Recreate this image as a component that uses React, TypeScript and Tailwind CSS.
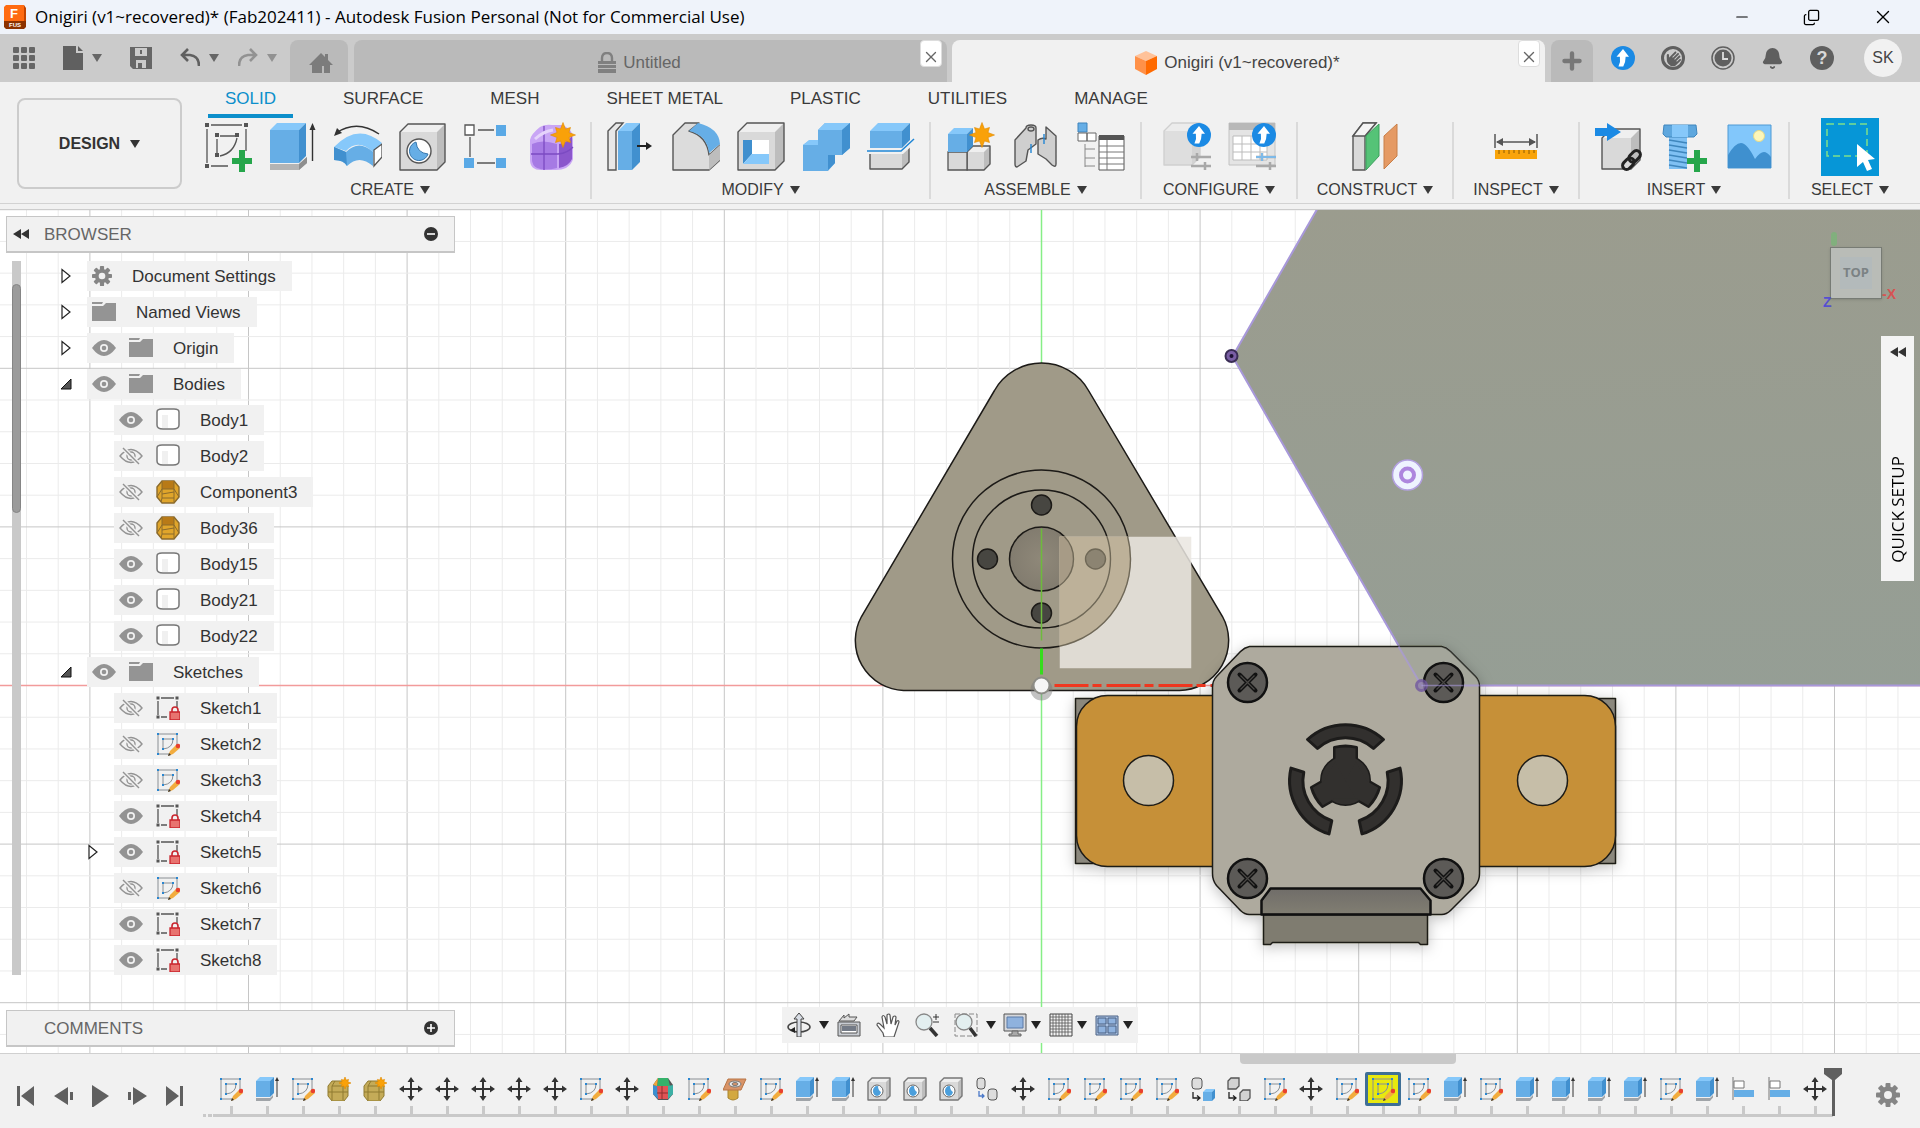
import type { ReactNode } from "react";
import clsx from "clsx";
import { Bell, Copy, Minus, Plus, X } from "lucide-react";
import { FaHand } from "react-icons/fa6";

type IconProps = { className?: string };

const BLUE = { front: "#66aee6", top: "#86c8fa", side: "#4190cf" };
const GRAY = { front: "#d9d9d9", top: "#efefef", side: "#bdbdbd" };

/* ---------- shared drawing helpers ---------- */

const Box = ({
  x, y, w, h, d, c, stroke = "none",
}: { x: number; y: number; w: number; h: number; d: number; c: typeof BLUE; stroke?: string }) => (
  <g stroke={stroke} strokeWidth={1.4} strokeLinejoin="round">
    <path d={`M${x} ${y + d}h${w}v${h}h${-w}z`} fill={c.front} stroke="none" />
    <path d={`M${x} ${y + d}l${d} ${-d}h${w}l${-d} ${d}z`} fill={c.top} stroke="none" />
    <path d={`M${x + w} ${y + d}l${d} ${-d}v${h}l${-d} ${d}z`} fill={c.side} stroke="none" />
    <path d={`M${x} ${y + d}l${d} ${-d}h${w}v${h}l${-d} ${d}h${-w}z`} fill="none" />
  </g>
);

const Star = ({ cx, cy, r }: { cx: number; cy: number; r: number }) => {
  const pts = Array.from({ length: 16 }, (_, i) => {
    const a = (i * Math.PI) / 8 - Math.PI / 2;
    const rr = i % 2 ? r * 0.52 : i % 4 ? r * 0.85 : r;
    return `${(cx + rr * Math.cos(a)).toFixed(2)},${(cy + rr * Math.sin(a)).toFixed(2)}`;
  }).join(" ");
  return <polygon points={pts} fill="#f9a109" stroke="#e08a00" strokeWidth={0.6} />;
};

const UpBadge = ({ cx, cy, r }: { cx: number; cy: number; r: number }) => (
  <g>
    <circle cx={cx} cy={cy} r={r} fill="#1b8ae4" />
    <path
      d={`M${cx} ${cy - r * 0.75}l${r * 0.5} ${r * 0.65}h${-r * 0.28}q0 ${r * 0.5} ${-r * 0.2} ${r * 0.8}h${-r * 0.4}q${r * 0.2} ${-r * 0.4} ${r * 0.12} ${-r * 0.8}h${-r * 0.28}z`}
      fill="#fff"
    />
  </g>
);

const Caret = ({ className }: IconProps) => (
  <svg className={clsx("h-2 w-2.5 shrink-0", className)} viewBox="0 0 10 8">
    <path d="M0 0h10L5 8z" fill="currentColor" />
  </svg>
);

const Rewind = () => (
  <svg className="h-3 w-4" viewBox="0 0 16 12">
    <path d="M8 1v10L0 6zM16 1v10L8 6z" fill="#333" />
  </svg>
);

/* ---------- ribbon icons ---------- */

const Tool = ({ children }: { children: ReactNode }) => (
  <svg className="h-[50px] w-12" viewBox="0 0 48 50">{children}</svg>
);

const CreateSketch = () => (
  <Tool>
    <path d="M7 3h31M3 7v34M7 44h17M42 7v22" stroke="#555" strokeWidth={1.3} fill="none" />
    <path d="M16 14h15M13 17v14M33 16q-3 15-17 18" stroke="#555" strokeWidth={1.3} fill="none" />
    <path d="M1 1h4v4H1zM40 1h4v4h-4zM1 42h4v4H1zM11 11h4v4h-4zM31 11h4v4h-4zM11 31h4v4h-4z" fill="#555" />
    <path d="M35 28h6v8h7v6h-7v8h-6v-8h-7v-6h7z" fill="#26a64b" />
  </Tool>
);
const Extrude = () => (
  <Tool>
    <path d="M1 42h29l8-7v6l-8 7H1z" fill="#b4b4b4" />
    <path d="M30 48l8-7v-6l-8 7z" fill="#8e8e8e" />
    <Box x={1} y={1} w={29} h={33} d={7} c={BLUE} />
    <path d="M43.500 39V6" stroke="#333" strokeWidth={1.4} />
    <path d="M43.500 1l3 7h-6z" fill="#333" />
  </Tool>
);
const Revolve = () => (
  <Tool>
    <path d="M2 11Q23-3 45 12" stroke="#333" strokeWidth={1.5} fill="none" />
    <path d="M0 14l3-8 5 5z" fill="#333" />
    <path d="M0 25Q24 0 48 21L39 30Q24 16 12 29z" fill="#86c8fa" />
    <path d="M0 25l12 5Q25 17 39 30v14Q25 32 13 44Q10 38 0 38z" fill="#66aee6" />
    <path d="M0 25l12 5 1 14Q10 38 0 38z" fill="#4190cf" />
    <path d="M40 28l8-6v13l-8 9z" fill="#fff" stroke="#555" strokeWidth={1.3} />
  </Tool>
);
const Hole = () => (
  <Tool>
    <Box x={1} y={2} w={37} h={38} d={8} c={GRAY} stroke="#555" />
    <ellipse cx={20} cy={29} rx={12} ry={12} fill="#fff" stroke="#555" strokeWidth={1.4} />
    <path d="M17 20a9.500 9.500 0 1 0 12 12q-11-1-12-12z" fill="#66aee6" stroke="#3878ad" />
  </Tool>
);
const Pattern = () => (
  <Tool>
    <path d="M14 8h16M6 15v20M13 41h18" stroke="#555" strokeWidth={1.3} />
    <path d="M1 3h9v10H1z" fill="#fff" stroke="#555" strokeWidth={1.3} />
    <path d="M32 3h10v11H32zM0 36h10v10H0zM32 36h10v10H32z" fill="#5aa9e6" />
  </Tool>
);
const Form = () => (
  <Tool>
    <path d="M1 18Q2 12 11 5q5-3 12-2h10q11 4 11 14v20q-1 5-7 9-4 2-10 2H12Q1 48 1 38z" fill="#c9a6f5" />
    <path d="M3 22q10-5 25 0v24q-12 3-20 0-5-3-5-8z" fill="#a67ae4" />
    <path d="M30 22q8-1 13-8v23q-3 7-13 9z" fill="#8b57cc" />
    <path d="M2 32h27q10-1 15-7M15 4v44" stroke="#7c4bc2" strokeWidth={1.3} fill="none" />
    <path d="M6 17q9-8 18-9" stroke="#e5d3fb" strokeWidth={3} fill="none" />
    <Star cx={34} cy={13} r={12.5} />
  </Tool>
);
const PressPull = () => (
  <Tool>
    <path d="M1 9l8-8h7L9 9v39H1z" fill="#e8e8e8" stroke="#555" strokeWidth={1.4} />
    <Box x={11} y={1} w={14} h={39} d={8} c={BLUE} />
    <path d="M30 24h12" stroke="#222" strokeWidth={2} />
    <path d="M39 20l6 4-6 4z" fill="#222" />
  </Tool>
);
const Fillet = () => (
  <Tool>
    <path d="M1 48V13L13 1h14L17 9q18 5 20 24l11-10v15L37 48z" fill="#dcdcdc" stroke="#555" strokeWidth={1.4} strokeLinejoin="round" />
    <path d="M17 9L26 1q21 5 22 21L37 31Q35 13 17 9z" fill="#66aee6" />
    <path d="M37 33l11-10v15L37 48z" fill="#bdbdbd" />
  </Tool>
);
const Shell = () => (
  <Tool>
    <Box x={1} y={1} w={37} h={38} d={9} c={GRAY} stroke="#555" />
    <path d="M6 18h26v24H6z" fill="#fff" />
    <path d="M6 18h9v14l-9 10z" fill="#3f8fce" />
    <path d="M6 42l9-10h17v10z" fill="#86c8fa" />
  </Tool>
);
const Combine = () => (
  <Tool>
    <path d="M1 23l7-5h8V8l7-7h25v25l-8 7h-7v8l-7 8H1z" fill="#66aee6" />
    <path d="M16 8l7-7h25l-8 7zM1 23l6-5h9v5z" fill="#86c8fa" />
    <path d="M40 8l8-7v25l-8 7zM26 33h7v8l-7 7z" fill="#4190cf" />
  </Tool>
);
const Split = () => (
  <Tool>
    <Box x={3} y={24} w={32} h={16} d={7} c={GRAY} stroke="#555" />
    <path d="M0 24v8h36l12-11v-8z" fill="#f1f1f1" />
    <path d="M0 29h34L47 17" stroke="#1f86d6" strokeWidth={1.5} fill="none" />
    <Box x={3} y={1} w={32} h={17} d={8} c={BLUE} />
  </Tool>
);
const NewComponent = () => (
  <Tool>
    <Box x={20} y={24} w={17} h={18} d={6} c={GRAY} stroke="#555" />
    <path d="M1 30h19v18H1z" fill="#d9d9d9" stroke="#555" strokeWidth={1.3} />
    <Box x={1} y={6} w={19} h={18} d={6} c={BLUE} />
    <Star cx={35} cy={13} r={12.5} />
  </Tool>
);
const Joint = () => (
  <Tool>
    <g fill="#cfcfcf" stroke="#555" strokeWidth={1.4} strokeLinejoin="round">
      <path d="M3 18L14 6q0-3 5-3t5 3v16l-8 6-2 11-9 6q-2 0-2-3z" />
      <path d="M34 5l10 9v28q0 4-4 1l-6-6-8-5V18q4-3 8-1z" />
      <ellipse cx={19} cy={7} rx={3} ry={2} />
    </g>
    <path d="M19 22v9M32 12v10" stroke="#2286d4" strokeWidth={1.4} />
  </Tool>
);
const Bom = () => (
  <Tool>
    <path d="M1 1h9v9H1z" fill="#66aee6" stroke="#3f83bb" />
    <path d="M1 11h9v8H1zM10 11h9v8h-9z" fill="#fff" stroke="#666" />
    <path d="M8 22v23M8 27h10M8 36h10M8 44h10" stroke="#888" fill="none" />
    <path d="M22 14h25v34H22z" fill="#fff" stroke="#555" />
    <path d="M22 13h25v5H22z" fill="#555" />
    <path d="M22 24h25M22 30h25M22 36h25M22 42h25M30 18v30" stroke="#777" />
  </Tool>
);
const Sliders = () => (
  <path d="M28 35h20M28 44h20M34 31v8M42 40v8" stroke="#a9a9a9" strokeWidth={2.5} />
);
const Configure = () => (
  <Tool>
    <Box x={1} y={1} w={28} h={34} d={8} c={{ front: "#dedede", top: "#ececec", side: "#d3d3d3" }} stroke="#d0d0d0" />
    <Sliders />
    <UpBadge cx={36} cy={13} r={12} />
  </Tool>
);
const ConfigTable = () => (
  <Tool>
    <path d="M1 1h46v42H1z" fill="#e4e4e4" stroke="#c2c2c2" />
    <path d="M1 1h46v7H1z" fill="#b8b8b8" />
    <path d="M5 14h34v24H5z" fill="#fff" stroke="#bbb" />
    <path d="M5 22h34M5 30h34M14 14v24M23 14v24M32 14v24" stroke="#bbb" />
    <Sliders />
    <path d="M28 35h20M34 31v8" stroke="#7db9e8" strokeWidth={2} />
    <UpBadge cx={36} cy={13} r={12} />
  </Tool>
);
const Construct = () => (
  <Tool>
    <path d="M2 14L12 1h13L14 14v34H2z" fill="#d9d9d9" stroke="#555" strokeWidth={1.4} />
    <path d="M2 14L12 1h13L14 14z" fill="#f4f4f4" stroke="#555" strokeWidth={1.4} />
    <path d="M15 14L28 2v32L15 48z" fill="#55c377" stroke="#3ba05c" />
    <path d="M33 14L46 2v32L33 47z" fill="#e59a64" stroke="#c87f49" />
  </Tool>
);
const Measure = () => (
  <Tool>
    <path d="M3 12v14M45 12v14M5 20h38" stroke="#555" strokeWidth={1.5} />
    <path d="M4 20l7-4v8zM44 20l-7-4v8z" fill="#555" />
    <path d="M3 28h42v9H3z" fill="#f9a40a" />
    <path d="M7 28v4M12 28v3M17 28v4M22 28v3M27 28v4M32 28v3M37 28v4M42 28v3" stroke="#8a5a00" />
  </Tool>
);
const InsertDerive = () => (
  <Tool>
    <Box x={7} y={7} w={29} h={31} d={9} c={GRAY} stroke="#555" />
    <path d="M0 6h12V1l14 9-14 9v-5H0z" fill="#1b8ae4" />
    <g fill="none" stroke="#222" strokeWidth={3}>
      <rect x={36} y={28} width={8} height={13} rx={4} transform="rotate(45 40 34)" />
      <rect x={29} y={35} width={8} height={13} rx={4} transform="rotate(45 33 42)" />
    </g>
  </Tool>
);
const Bolt = () => (
  <Tool>
    <path d="M9 13h18v34H9z" fill="#7fc0f3" />
    <path d="M9 18l18 3M9 23l18 3M9 28l18 3M9 33l18 3M9 38l18 3M9 43l18 3" stroke="#3f86bd" strokeWidth={1.3} />
    <path d="M4 3h32l1 9-3 3H6l-3-3z" fill="#5ea7de" stroke="#3f86bd" />
    <path d="M12 3h16v12H12z" fill="#86c8fa" />
    <path d="M34 28h6v8h7v6h-7v8h-6v-8h-7v-6h7z" fill="#26a64b" />
  </Tool>
);
const Canvas = () => (
  <Tool>
    <path d="M3 3h43v43H3z" fill="#82c7fb" stroke="#4f9ad4" />
    <circle cx={34} cy={14} r={5.5} fill="#fdf6b8" stroke="#e4d98a" />
    <path d="M3 33q7-12 13-12t14 16q5-7 9-7 3 0 7 5v11H3z" fill="#3f90cf" />
  </Tool>
);
const SelectTool = () => (
  <svg className="h-[58px] w-[58px] bg-[#0696d7]" viewBox="0 0 58 58">
    <path d="M6 6h40v32H6z" fill="none" stroke="#7fe08b" strokeWidth={1.5} strokeDasharray="7 4" />
    <path d="M36 26v23l6-5 4 9 5-2-4-9 7-1z" fill="#fff" />
  </svg>
);

/* ---------- small icons: browser tree and timeline ---------- */

const Sm = ({ children, className = "h-6 w-6" }: { children: ReactNode; className?: string }) => (
  <svg className={clsx("shrink-0", className)} viewBox="0 0 24 24">{children}</svg>
);

const SketchIcon = () => (
  <Sm>
    <path d="M2 2h19v14M2 2v20h12" fill="none" stroke="#8a8f94" />
    <path d="M7 7h10q0 9-10 10z" fill="none" stroke="#8a8f94" />
    <path d="M1 1h2v2H1zM20 1h2v2h-2zM1 21h2v2H1zM6 6h2v2H6zM16 6h2v2h-2zM6 16h2v2H6z" fill="#2b86cf" />
    <path d="M12 24l2-5 6-6 4 3-7 6z" fill="#f2ac3e" />
    <path d="M12 24l1-3 2 2z" fill="#333" />
    <circle cx={22} cy={14} r={2.3} fill="#e8402f" />
  </Sm>
);
const LockedSketch = () => (
  <Sm>
    <path d="M5 2h13M2 5v14M5 21h6M21 5v6" stroke="#555" strokeWidth={1.3} />
    <path d="M.5.5h3v3h-3zM19.500.5h3v3h-3zM.5 19.500h3v3h-3z" fill="#555" />
    <path d="M16 17v-3q0-3 3-3t3 3v3" fill="none" stroke="#c9252d" strokeWidth={1.6} />
    <path d="M14 16h10v8H14z" fill="#e8736f" stroke="#c9252d" strokeWidth={1.3} />
  </Sm>
);
const ExtrudeSm = () => (
  <Sm>
    <path d="M1 21h14l3-3v2.500L15 24H1z" fill="#a0a4a8" />
    <Box x={1} y={0} w={14} h={16} d={4} c={BLUE} />
    <path d="M22 20V3" stroke="#333" />
    <path d="M22 0l2 4h-4z" fill="#333" />
  </Sm>
);
const FormSm = () => (
  <Sm>
    <path d="M1 9l4-5h12l4 5v10l-4 5H5l-4-5z" fill="#c4ab58" stroke="#8f7a31" />
    <path d="M5 9h11v14M5 9v14M1 15h20M5 9L8 4M16 9l4-2" stroke="#8f7a31" fill="none" />
    <Star cx={18} cy={6} r={6} />
  </Sm>
);
const MoveSm = () => (
  <Sm>
    <path d="M12 3v18M3 12h18" stroke="#333" strokeWidth={2} />
    <path d="M12 0l3.500 5h-7zM12 24l3.500-5h-7zM0 12l5-3.500v7zM24 12l-5-3.500v7z" fill="#333" />
  </Sm>
);
const MeshSm = () => (
  <Sm>
    <path d="M2 8l5-7h10l5 7v9l-5 6H7l-5-6z" fill="#555" />
    <path d="M7 1h10l2 8H6z" fill="#35b26a" />
    <path d="M2 8l5 1v13l-5-5z" fill="#3b8fd0" />
    <path d="M6 9h11v13H7z" fill="#e25454" />
    <path d="M17 9l5-1v9l-5 5z" fill="#3cb0a5" />
    <path d="M2 8l5-7-1 8z" fill="#f2a63c" />
    <path d="M6 16h11M11 9v13" stroke="#8d2e2e" fill="none" />
  </Sm>
);
const FunnelSm = () => (
  <Sm>
    <path d="M5 12h10v9q-5 4-10 0z" fill="#d3a83f" stroke="#a88430" />
    <path d="M5 2h18l-5 11H0z" fill="#d99468" stroke="#b87545" />
    <ellipse cx={12} cy={7} rx={6} ry={3} fill="#eee" stroke="#777" />
    <ellipse cx={12} cy={7} rx={3} ry={1.5} fill="#d99468" stroke="#777" />
  </Sm>
);
const HoleSm = () => (
  <Sm>
    <Box x={1} y={1} w={18} h={18} d={4} c={GRAY} stroke="#777" />
    <circle cx={10} cy={14} r={6} fill="#fff" stroke="#666" />
    <ellipse cx={10} cy={14} rx={4} ry={5} fill="#4b9fdc" />
    <path d="M11 9a4 5 0 0 1 3 6q-3-2-3-6z" fill="#fff" />
  </Sm>
);
const PasteBodies = () => (
  <Sm>
    <rect x={2} y={1} width={8} height={11} rx={3} fill="#ddd" stroke="#555" />
    <rect x={13} y={12} width={9} height={11} rx={3} fill="#ddd" stroke="#555" />
    <path d="M4 14v5h5M7 17l2 2-2 2" fill="none" stroke="#4b79c9" strokeWidth={1.3} />
  </Sm>
);
const CopyBlue = () => (
  <Sm>
    <rect x={1} y={1} width={10} height={11} rx={3} fill="#ddd" stroke="#555" />
    <Box x={12} y={12} w={9} h={9} d={3} c={BLUE} />
    <path d="M2 15v6h6M6 18.500l3 2.500-3 2.500" fill="none" stroke="#222" strokeWidth={1.3} />
  </Sm>
);
const CopyGray = () => (
  <Sm>
    <path d="M1 4l3-3h8v8l-3 3H1zM13 16l3-3h7v8l-3 3h-7z" fill="#d2d2d2" stroke="#555" strokeWidth={1.3} />
    <path d="M2 15v6h6M6 18.500l3 2.500-3 2.500" fill="none" stroke="#222" strokeWidth={1.3} />
  </Sm>
);
const AlignSm = () => (
  <Sm>
    <path d="M2 0v23" stroke="#777" />
    <path d="M3 4h10v7H3z" fill="#fff" stroke="#777" />
    <path d="M3 13h20v7H3z" fill="#66aee6" />
  </Sm>
);

const Eye = () => (
  <Sm>
    <path d="M0 12q12-16 24 0q-12 16-24 0z" fill="#939393" />
    <circle cx={12} cy={12} r={4} fill="#f1f1f1" />
    <circle cx={12} cy={12} r={2.3} fill="#939393" />
  </Sm>
);
const EyeOff = () => (
  <Sm>
    <g fill="none" stroke="#939393" strokeWidth={1.4}>
      <path d="M1 12q11-13 22 0q-11 13-22 0z" />
      <circle cx={12} cy={12} r={4} />
      <path d="M5 5l15 15" stroke="#f1f1f1" strokeWidth={4} />
      <path d="M4 4l16 16" />
    </g>
  </Sm>
);
const Folder = () => (
  <Sm>
    <path d="M0 2h11l-1 2H0zM0 6h11l3-3h10v18H0z" fill="#949494" />
  </Sm>
);
const Gear = ({ className }: IconProps) => (
  <Sm className={className}>
    <g fill="#858585">
      {[0, 45, 90, 135].map((a) => (
        <rect key={a} x={9.5} y={0} width={5} height={24} rx={1} transform={`rotate(${a} 12 12)`} />
      ))}
      <circle cx={12} cy={12} r={8.5} />
    </g>
    <circle cx={12} cy={12} r={4} fill="#f1f1f1" />
  </Sm>
);
const Body = () => (
  <Sm>
    <path d="M1 4q0-3 5-3h12q5 0 5 3v13q0 4-6 4H7q-6 0-6-4z" fill="#fff" stroke="#777" strokeWidth={1.5} />
    <path d="M6 7h6v13H6z" fill="#f0f0f0" />
  </Sm>
);
const MeshBody = () => (
  <Sm>
    <path d="M1 7l5-6h12l5 6v10l-5 6H6l-5-6z" fill="#e0a52b" stroke="#8a6a2c" strokeWidth={1.4} />
    <path d="M6 1v8h12V1z" fill="#b87a17" />
    <path d="M6 9h12v9H6zM6 1v8L1 17M18 1v8l5 8M6 18l-1 4M18 18v4M6 14l12-2" fill="none" stroke="#8a6a2c" />
  </Sm>
);

const Expand = () => (
  <svg className="h-4 w-3" viewBox="0 0 12 16"><path d="M2 1.500v13l8-6.500z" fill="#fff" stroke="#222" strokeWidth={1.2} /></svg>
);
const Collapse = () => (
  <svg className="h-4 w-3" viewBox="0 0 12 16"><path d="M11 3v10H1z" fill="#555" stroke="#111" /></svg>
);

/* ---------- data ---------- */

const ribbonTabs = ["SOLID", "SURFACE", "MESH", "SHEET METAL", "PLASTIC", "UTILITIES", "MANAGE"];

const ribbonGroups = [
  { label: "CREATE", width: "w-[394px] pr-2", tools: [CreateSketch, Extrude, Revolve, Hole, Pattern, Form] },
  { label: "MODIFY", width: "w-[339px]", tools: [PressPull, Fillet, Shell, Combine, Split] },
  { label: "ASSEMBLE", width: "w-[211px]", tools: [NewComponent, Joint, Bom] },
  { label: "CONFIGURE", width: "w-[156px]", tools: [Configure, ConfigTable] },
  { label: "CONSTRUCT", width: "w-[156px]", tools: [Construct] },
  { label: "INSPECT", width: "w-[126px]", tools: [Measure] },
  { label: "INSERT", width: "w-[210px]", tools: [InsertDerive, Bolt, Canvas] },
  { label: "SELECT", width: "w-[120px]", tools: [SelectTool] },
];

type Row = { name: string; level: 1 | 2; caret?: "open" | "closed"; eye?: "on" | "off"; icon: () => ReactNode };

const rows: Row[] = [
  { name: "Document Settings", level: 1, caret: "closed", icon: () => <Gear className="h-5 w-5" /> },
  { name: "Named Views", level: 1, caret: "closed", icon: Folder },
  { name: "Origin", level: 1, caret: "closed", eye: "on", icon: Folder },
  { name: "Bodies", level: 1, caret: "open", eye: "on", icon: Folder },
  { name: "Body1", level: 2, eye: "on", icon: Body },
  { name: "Body2", level: 2, eye: "off", icon: Body },
  { name: "Component3", level: 2, eye: "off", icon: MeshBody },
  { name: "Body36", level: 2, eye: "off", icon: MeshBody },
  { name: "Body15", level: 2, eye: "on", icon: Body },
  { name: "Body21", level: 2, eye: "on", icon: Body },
  { name: "Body22", level: 2, eye: "on", icon: Body },
  { name: "Sketches", level: 1, caret: "open", eye: "on", icon: Folder },
  { name: "Sketch1", level: 2, eye: "off", icon: LockedSketch },
  { name: "Sketch2", level: 2, eye: "off", icon: SketchIcon },
  { name: "Sketch3", level: 2, eye: "off", icon: SketchIcon },
  { name: "Sketch4", level: 2, eye: "on", icon: LockedSketch },
  { name: "Sketch5", level: 2, caret: "closed", eye: "on", icon: LockedSketch },
  { name: "Sketch6", level: 2, eye: "off", icon: SketchIcon },
  { name: "Sketch7", level: 2, eye: "on", icon: LockedSketch },
  { name: "Sketch8", level: 2, eye: "on", icon: LockedSketch },
];

const timelineIcons: Record<string, () => ReactNode> = {
  s: SketchIcon, e: ExtrudeSm, f: FormSm, m: MoveSm, x: MeshSm, u: FunnelSm,
  h: HoleSm, p: PasteBodies, b: CopyBlue, g: CopyGray, a: AlignSm,
};
const timeline = "sesffmmmmmsmxsuseehhhpmssssbgsmssseseeeeseaam".split("");
const activeStep = 32;

/* ---------- window chrome ---------- */

const TitleBar = () => (
  <header className="flex h-[34px] items-center bg-[#eff3fa] pl-1">
    <svg className="h-6 w-6" viewBox="0 0 24 24">
      <path d="M2 0h18v17H0V2z" fill="#ff6b12" />
      <path d="M20 0l2 3v18l-2 1z" fill="#c24400" />
      <path d="M0 16h22v6l-2 2H2l-2-2z" fill="#8c3200" />
      <text x="10" y="12.500" textAnchor="middle" className="fill-white text-[13px] font-bold">F</text>
      <text x="11" y="22" textAnchor="middle" className="fill-white text-[6px] font-bold">FUS</text>
    </svg>
    <h1 className="ml-[7px] font-['Open_Sans',sans-serif] text-[17px] text-black">
      Onigiri (v1~recovered)* (Fab202411) - Autodesk Fusion Personal (Not for Commercial Use)
    </h1>
    <div className="ml-auto flex items-center gap-[52px] pr-[26px] text-black">
      <button aria-label="Minimize"><Minus size={18} strokeWidth={1.5} /></button>
      <button aria-label="Restore"><Copy size={17} strokeWidth={1.8} className="-scale-x-100 rotate-180" /></button>
      <button aria-label="Close"><X size={22} strokeWidth={1.5} /></button>
    </div>
  </header>
);

const DocTab = ({ title, active, icon }: { title: string; active?: boolean; icon: ReactNode }) => (
  <div className={clsx("relative flex h-full flex-1 rounded-t-lg", active ? "bg-[#f1f1f1] text-[#444]" : "bg-[#bababa] text-[#666]")}>
    <button className="flex flex-1 items-center justify-center gap-[7px] pr-[22px] pt-1">{icon}{title}</button>
    <button
      aria-label={`Close ${title}`}
      className="absolute right-[5px] top-0 flex h-[27px] w-[22px] items-end justify-center rounded border border-[#ddd] bg-white text-[#666]"
    >
      <X size={18} strokeWidth={1.8} />
    </button>
  </div>
);

const TabBar = () => (
  <div className="flex h-12 bg-[#cbcbcb] pt-1.5 text-[17px] text-[#666]">
    <div className="flex w-[290px] shrink-0 items-center pb-1.5 pl-[13px]">
      <button aria-label="Data panel">
        <svg className="h-[22px] w-[22px]" viewBox="0 0 22 22" fill="#666">
          {[0, 8, 16].map((y) => [0, 8, 16].map((x) => <rect key={`${x}-${y}`} x={x} y={y} width={6} height={6} rx={1} />))}
        </svg>
      </button>
      <button aria-label="File" className="ml-7 flex items-center gap-[9px]">
        <svg className="h-6 w-5" viewBox="0 0 20 24"><path d="M0 0h13v7h7v17H0zM15 0l5 5h-5z" fill="#606060" /></svg>
        <Caret />
      </button>
      <button aria-label="Save" className="ml-7">
        <svg className="h-[22px] w-[22px]" viewBox="0 0 22 22">
          <path d="M0 0h22v22H3l-3-3zM5 1v8h12V1zM6 13v8h10v-8z" fill="#666" fillRule="evenodd" />
          <path d="M10 3h2v4h-2zM8 16h4v5H8z" fill="#666" />
        </svg>
      </button>
      <button aria-label="Undo" className="ml-7 flex items-center gap-[9px]">
        <svg className="h-5 w-5" viewBox="0 0 20 20" fill="none" stroke="#606060" strokeWidth={2.6}><path d="M8 1L2 7l6 6M2 7h8q9 1 9 11" /></svg>
        <Caret />
      </button>
      <button aria-label="Redo" className="ml-[19px] flex items-center gap-[9px] text-[#929292]">
        <svg className="h-5 w-5" viewBox="0 0 20 20" fill="none" stroke="#929292" strokeWidth={2.6}><path d="M12 1l6 6-6 6M18 7h-8Q1 8 1 18" /></svg>
        <Caret />
      </button>
    </div>
    <button aria-label="Home" className="mr-1.5 flex w-[58px] shrink-0 items-center justify-center rounded-t-lg bg-[#bababa]">
      <svg className="ml-1 mt-1 h-5 w-6" viewBox="0 0 24 20"><path d="M12 0l4 4V1h3v6l5 5h-3v8h-6v-7h-2v7H3v-8H0zM9 13h2v4H9z" fill="#7c7c7c" /></svg>
    </button>
    <div className="flex flex-1 gap-[5px]">
      <DocTab
        title="Untitled"
        icon={
          <svg className="h-[22px] w-[18px]" viewBox="0 0 18 22">
            <path d="M4 10V6q0-5 5-5t5 5v4" fill="none" stroke="#808080" strokeWidth={2.4} />
            <path d="M0 9h18v3H0zM0 13h18v3H0zM0 17h18v4H0z" fill="#808080" />
          </svg>
        }
      />
      <DocTab
        active
        title="Onigiri (v1~recovered)*"
        icon={
          <svg className="h-6 w-[22px]" viewBox="0 0 22 24">
            <path d="M11 0l11 5-11 5L0 5z" fill="#ffc299" />
            <path d="M0 5l11 5v14L0 18z" fill="#ff9148" />
            <path d="M22 5l-11 5v14l11-6z" fill="#ff6a00" />
          </svg>
        }
      />
    </div>
    <button aria-label="New design" className="ml-1.5 flex w-[42px] items-center justify-center rounded-t-lg bg-[#bababa]">
      <Plus size={26} strokeWidth={4} color="#777" />
    </button>
    <div className="flex items-center gap-[26px] pb-1.5 pl-[18px] pr-[18px]">
      <button aria-label="Updates"><svg className="h-6 w-6" viewBox="0 0 24 24"><UpBadge cx={12} cy={12} r={12} /></svg></button>
      <button aria-label="Extensions" className="flex h-6 w-6 items-center justify-center rounded-full border-[3px] border-[#5f5f5f]">
        <FaHand size={15} color="#5f5f5f" className="rotate-45" />
      </button>
      <button aria-label="Job status">
        <svg className="h-6 w-6" viewBox="0 0 24 24">
          <circle cx={12} cy={12} r={11} fill="none" stroke="#5f5f5f" strokeWidth={1.5} />
          <circle cx={12} cy={12} r={8.5} fill="#5f5f5f" />
          <path d="M12 6v7h5" stroke="#ddd" strokeWidth={1.8} fill="none" />
        </svg>
      </button>
      <button aria-label="Notifications"><Bell size={23} color="#5f5f5f" fill="#5f5f5f" /></button>
      <button aria-label="Help" className="flex h-6 w-6 items-center justify-center rounded-full bg-[#5f5f5f] text-lg font-bold text-[#d8d8d8]">?</button>
      <button aria-label="Account" className="ml-1 flex h-[38px] w-[38px] items-center justify-center rounded-full bg-[#f1f1f1] text-base text-[#444]">SK</button>
    </div>
  </div>
);

const Ribbon = () => (
  <section className="flex h-[128px] border-b border-[#ccc] bg-[#f1f1f1] shadow-[inset_0_-5px_0_#f1f1f1,inset_0_-6px_0_#d2d2d2]">
    <div className="w-[198px] shrink-0 pl-[17px] pt-4">
      <button className="flex h-[91px] w-[165px] items-center justify-center gap-2.5 rounded-lg border-2 border-[#ccc] text-base font-bold text-[#333]">
        DESIGN <Caret />
      </button>
    </div>
    <div className="flex-1">
      <nav className="ml-[10px] flex h-9 gap-[33px]">
        {ribbonTabs.map((tab, i) => (
          <button key={tab} className={clsx("border-b-4 px-[17px] pt-0.5", i === 0 ? "border-[#0c8fcb] text-[#0c8fcb]" : "border-transparent")}>
            {tab}
          </button>
        ))}
      </nav>
      <div className="mt-1 flex">
        {ribbonGroups.map(({ label, width, tools }, i) => (
          <div
            key={label}
            className={clsx("flex h-[77px] flex-col items-center justify-between", width, i < ribbonGroups.length - 1 && "border-r-2 border-[#dadada]")}
          >
            <div className="flex h-[50px] items-center">
              {tools.map((Icon, n) => (
                <button key={n} aria-label={`${label} ${n + 1}`} className="flex w-[65px] justify-center"><Icon /></button>
              ))}
            </div>
            <button className="flex items-center gap-1.5 text-base leading-[18px]">{label}<Caret /></button>
          </div>
        ))}
      </div>
    </div>
  </section>
);

/* ---------- model view ---------- */

const OX = 1041;
const OY = 475;
const GRID = 31.72;

const screws = [[1247, 472], [1443, 472], [1247, 668], [1443, 668]];

const plate = "M1249 436H1441Q1446 437 1450 441L1475 466Q1479 470 1479 477V663Q1479 670 1475 675L1450 700Q1446 704 1441 704H1249Q1244 704 1240 700L1216 675Q1212 670 1212 663V477Q1212 470 1216 466L1240 441Q1244 437 1249 436Z";

const Scene = () => (
  <svg className="absolute inset-0 h-full w-full" aria-label="Model view">
    <defs>
      <linearGradient id="hex" x1="0" y1="0" x2="0.3" y2="1">
        <stop offset="0" stopColor="#9b9c8e" />
        <stop offset="1" stopColor="#959e95" />
      </linearGradient>
      <linearGradient id="plug" x1="0" y1="0" x2="0" y2="1">
        <stop offset="0" stopColor="#706d69" />
        <stop offset="1" stopColor="#817e72" />
      </linearGradient>
      <radialGradient id="bore">
        <stop offset="0" stopColor="#8f8879" />
        <stop offset="1" stopColor="#827c6f" />
      </radialGradient>
      <filter id="soft" x="-10%" y="-10%" width="120%" height="120%">
        <feDropShadow dx="0" dy="3" stdDeviation="7" floodColor="#000" floodOpacity="0.25" />
      </filter>
      <clipPath id="plateClip"><path d={plate} /></clipPath>
      <clipPath id="flange"><circle cx={OX} cy={349} r={89} /></clipPath>
      <clipPath id="plane"><rect x={1059} y={326} width={132} height={132} /></clipPath>
    </defs>

    <g transform="translate(0.5 0.5)">
      {Array.from({ length: 160 }, (_, i) => i - 40).map((i) => (
        <g key={i} stroke={i % 5 ? "#ebebeb" : "#c6c6c6"}>
          <line x1={OX + i * GRID} x2={OX + i * GRID} y1="-1" y2="100%" />
          <line x1="-1" x2="100%" y1={OY + i * GRID} y2={OY + i * GRID} />
        </g>
      ))}
      <line x1="-1" x2="100%" y1={OY} y2={OY} stroke="#f29b9b" strokeWidth={1.5} />
      <line x1={OX} x2={OX} y1="-1" y2="100%" stroke="#86ee86" strokeWidth={1.5} />

      {/* hexagon */}
      <path d="M1317 -2L1232 146L1421 475H4000V-2Z" fill="url(#hex)" stroke="#a898da" strokeWidth={2} />
      <circle cx={1231} cy={145.5} r={6} fill="#7a5fa5" stroke="#3a2d55" strokeWidth={2} />
      <circle cx={1231} cy={145.5} r={2} fill="#1d1233" />
      <circle cx={1407} cy={264.5} r={15} fill="#eef3ff" stroke="#b3a0e0" strokeWidth={1.5} />
      <circle cx={1407} cy={264.5} r={6.5} fill="#eef3ff" stroke="#ad86de" strokeWidth={4} />

      {/* bracket */}
      <g stroke="#1c1a17" strokeWidth={1.5}>
        <path d="M994 180A54 54 0 0 1 1088 180L1222 406A50 50 0 0 1 1179 480H903A50 50 0 0 1 861 406Z" fill="#a09a88" />
        <circle cx={OX} cy={348.5} r={89} fill="none" />
        <circle cx={OX} cy={348.5} r={69} fill="none" />
        <circle cx={OX} cy={348.5} r={32} fill="url(#bore)" />
        {[[0, -54], [-54, 0], [54, 0], [0, 54]].map(([x, y]) => (
          <circle key={`${x},${y}`} cx={OX + x} cy={348.5 + y} r={10} fill="#474641" />
        ))}
      </g>

      {/* origin plane */}
      <g clipPath="url(#plane)">
        <rect x={1059} y={326} width={132} height={132} fill="#eae6e1" opacity={0.85} />
        <g stroke="#6f6857" strokeWidth={1.4}>
          <circle cx={OX} cy={348.5} r={89} fill="#bdb199" />
          <circle cx={OX} cy={348.5} r={69} fill="none" />
          <circle cx={OX} cy={348.5} r={32} fill="#a79b86" />
          <circle cx={1095} cy={348.5} r={10} fill="#8c8472" />
        </g>
      </g>
      <line x1={OX} x2={OX} y1={318} y2={430} stroke="#6dbb3c" strokeWidth={1.5} />
      <line x1={OX} x2={OX} y1={438} y2={464} stroke="#35dc1c" strokeWidth={3} />
      <path d="M1054 475H1212" stroke="#f0371f" strokeWidth={3} strokeDasharray="34 4 9 5" />
      <circle cx={OX} cy={479} r={11} fill="#777" opacity={0.45} />
      <circle cx={OX} cy={475} r={8} fill="#f5f5f5" stroke="#8c8c86" strokeWidth={2} />

      {/* motor */}
      <g filter="url(#soft)">
        <g stroke="#1c1a17" strokeWidth={1.5} strokeLinejoin="round">
          <rect x={1075} y={488} width={540} height={165} fill="#8b887d" />
          <rect x={1076} y={485} width={539} height={171} rx={31} fill="#c69038" />
          <circle cx={1148} cy={570} r={25} fill="#c6bea8" />
          <circle cx={1542} cy={570} r={25} fill="#c6bea8" />
          <path d="M1263 700H1427V734H1420L1418 732H1272L1270 734H1263Z" fill="#7f7c70" />
          <path d={plate} fill="#aeaa9e" />
        </g>
      </g>
      <path d="M1317 0L1232 146L1421 475H1600V0Z" fill="#96a096" opacity={0.4} clipPath="url(#plateClip)" />
      <path d="M1398 436L1421 475H1479" fill="none" stroke="#a898da" strokeWidth={2} opacity={0.7} />
      <g stroke="#111" strokeWidth={2} strokeLinejoin="round">
        {screws.map(([x, y]) => (
          <g key={`${x}-${y}`}>
            <circle cx={x} cy={y} r={19.5} fill="#5c5a57" strokeWidth={2.5} />
            <path d={`M${x - 8} ${y - 8}l16 16M${x + 8} ${y - 8}l-16 16`} strokeWidth={4} strokeLinecap="round" />
            <path d={`M${x - 7} ${y - 7}l14 14M${x + 7} ${y - 7}l-14 14`} stroke="#4a4845" strokeWidth={1.2} />
          </g>
        ))}
        <path d="M1261 704V690L1270 678H1420L1430 690V704Z" fill="url(#plug)" strokeWidth={2.5} />
        <path d="M1263 704H1427" strokeWidth={1.5} />
      </g>
      <circle cx={1421} cy={475} r={5} fill="#9182ad" stroke="#7258a0" strokeWidth={3} opacity={0.8} />
      <path d="M1421 475H1463" stroke="#a898da" strokeWidth={1.5} opacity={0.6} />

      {/* vents */}
      <g fill="#32302e" stroke="#1d1c1b" strokeWidth={3} strokeLinejoin="round">
        {[0, 120, 240].map((a) => (
          <g key={a} transform={`rotate(${a} 1345 570)`}>
            <path d="M1307 529A56 56 0 0 1 1383 529L1373 538A42 42 0 0 0 1317 538Z" />
            <path d="M1334 550V537Q1345 534 1356 537V550Q1364 556 1368 566H1322Q1326 556 1334 550Z" />
          </g>
        ))}
        <circle cx={1345} cy={570} r={24} />
      </g>
      <circle cx={1345} cy={570} r={24} fill="#32302e" />
      {[0, 120, 240].map((a) => (
        <path key={a} d="M1335 538H1355V551L1366 570H1324L1335 551Z" fill="#32302e" transform={`rotate(${a} 1345 570)`} />
      ))}
    </g>
  </svg>
);

const TreeRow = ({ name, level, caret, eye, icon }: Row) => (
  <li className={clsx("flex h-[30px] items-center", level === 1 ? "pl-[39px]" : "pl-[66px]")}>
    <span className="flex w-[27px] shrink-0">
      {caret && <button aria-label={`Toggle ${name}`}>{caret === "open" ? <Collapse /> : <Expand />}</button>}
    </span>
    <div className="flex h-full items-center bg-[#f1f1f1] pl-[5px] pr-4">
      {eye && (
        <button aria-label={`Show ${name}`} className="mr-[13px]">{eye === "on" ? <Eye /> : <EyeOff />}</button>
      )}
      {icon()}
      <span className="ml-5 pt-0.5">{name}</span>
    </div>
  </li>
);

const PanelHeader = ({ title, open }: { title: string; open?: boolean }) => (
  <div className="flex h-[37px] items-center border border-b-2 border-[#c6c6c6] bg-[#f1f1f1] pl-1.5 pr-4 text-[#666]">
    <span className="w-[31px]">{open && <button aria-label="Collapse browser" className="block"><Rewind /></button>}</span>
    <span className="pt-0.5">{title}</span>
    <button aria-label={`${title} options`} className="ml-auto">
      <svg className="h-3.5 w-3.5" viewBox="0 0 14 14">
        <circle cx={7} cy={7} r={7} fill="#333" />
        <path d={open ? "M3 7h8" : "M3 7h8M7 3v8"} stroke="#fff" strokeWidth={1.6} />
      </svg>
    </button>
  </div>
);

const NavBar = () => (
  <div className="flex h-9 items-center bg-[#f1f1f1] px-[5px] text-[#222]">
    <button aria-label="Orbit" className="flex items-center gap-2">
      <Sm>
        <ellipse cx={12} cy={14} rx={11} ry={5} fill="none" stroke="#444" strokeWidth={1.5} />
        <path d="M10 24V6H7l5-6 5 6h-3v18z" fill="#d8dde5" stroke="#444" />
        <path d="M3 17l5-3v6z" fill="#222" />
      </Sm>
      <Caret />
    </button>
    <button aria-label="Look at" className="ml-2">
      <Sm>
        <path d="M1 9h22v14H1z" fill="#c8ccd2" stroke="#555" />
        <path d="M4 12h16v8H4z" fill="#fff" stroke="#555" />
        <path d="M5 13h14v5H5z" fill="#737a86" />
        <path d="M2 8l5-6v3l5-4v3h8l-3 4z" fill="#ddd" stroke="#555" />
      </Sm>
    </button>
    <button aria-label="Pan" className="ml-[15px]">
      <Sm>
        <path d="M8 24l-1-4-6-8q0-3 3-1l4 4L6 4q1-3 3 0l2 7V2q2-2 3 0l1 9 2-7q2-2 3 0l-1 8 2-4q2-1 2 1l-3 9-2 6z" fill="#fff" stroke="#555" strokeWidth={1.2} />
      </Sm>
    </button>
    <button aria-label="Zoom" className="ml-[15px]">
      <Sm>
        <circle cx={9} cy={9} r={8} fill="#e3eff0" stroke="#888" strokeWidth={1.3} />
        <path d="M15 15l7 8" stroke="#333" strokeWidth={3.5} />
        <path d="M18 4h6M21 1v6M18 9h6" stroke="#333" />
      </Sm>
    </button>
    <button aria-label="Zoom window" className="ml-[15px] flex items-center gap-2">
      <Sm>
        <path d="M1 1h22v22H1z" fill="none" stroke="#888" strokeDasharray="5 2" />
        <circle cx={10} cy={9} r={8} fill="#e3eff0" stroke="#888" strokeWidth={1.3} />
        <path d="M16 15l6 8" stroke="#333" strokeWidth={3.5} />
      </Sm>
      <Caret />
    </button>
    <button aria-label="Display settings" className="ml-[7px] flex items-center gap-1">
      <Sm>
        <path d="M1 1h22v17H1z" fill="#d5d7db" stroke="#555" />
        <path d="M4 4h16v11H4z" fill="#8fb2de" stroke="#5b7ba8" />
        <path d="M9 18h6v3h3v2H6v-2h3z" fill="#aaa" stroke="#666" />
      </Sm>
      <Caret />
    </button>
    <button aria-label="Grid and snaps" className="ml-2 flex items-center gap-1">
      <Sm>
        <path d="M1 1h22v22H1z" fill="#f3f3f3" stroke="#444" />
        <path d="M1 4h22M1 7h22M1 10h22M1 13h22M1 16h22M1 19h22M4 1v22M7 1v22M10 1v22M13 1v22M16 1v22M19 1v22" stroke="#555" strokeWidth={0.8} />
      </Sm>
      <Caret />
    </button>
    <button aria-label="Viewports" className="ml-2 flex items-center gap-1">
      <Sm>
        <path d="M1 3h22v19H1z" fill="#a9c1e2" stroke="#4a6082" />
        <path d="M3 5h8v6H3zM13 5h8v6h-8zM3 13h8v7H3zM13 13h8v7h-8z" fill="#8fb2de" stroke="#4a6082" />
      </Sm>
      <Caret />
    </button>
  </div>
);

const ViewCube = () => (
  <div className="relative mr-[38px] mt-[37px] flex h-[52px] w-[52px] items-center justify-center border border-[#777b74] bg-[#b9bcb7] shadow">
    <button className="flex h-8 w-8 items-center justify-center bg-[#b3babb] font-['Open_Sans',sans-serif] text-[13px] font-bold text-[#7b8284]">TOP</button>
    <span className="absolute -top-4 left-0 h-3.5 w-1.5 rounded bg-[#72bd72] opacity-60" />
    <span className="absolute -bottom-3 -left-2 text-sm font-bold leading-4 text-[#5650d0]">Z</span>
    <span className="absolute -right-[15px] -bottom-0.5 text-sm font-bold leading-3 text-[#d65353]">-X</span>
  </div>
);

const Viewport = () => (
  <main className="relative flex h-[843px] justify-between overflow-hidden bg-white">
    <Scene />
    <aside className="relative ml-1.5 flex w-[449px] flex-col justify-between py-1.5">
      <div>
        <PanelHeader title="BROWSER" open />
        <div className="mt-2 flex pl-1.5">
          <div className="w-[9px] bg-[#c9c9c9] pt-[23px]">
            <div className="h-[229px] rounded-full border border-[#858585] bg-[#9b9b9b]" />
          </div>
          <ul className="flex flex-col gap-1.5 text-[#333]">
            {rows.map((r) => <TreeRow key={r.name} {...r} />)}
          </ul>
        </div>
      </div>
      <PanelHeader title="COMMENTS" />
    </aside>
    <div className="absolute bottom-2.5 left-1/2 -translate-x-1/2"><NavBar /></div>
    <aside className="relative flex flex-col items-end">
      <ViewCube />
      <button className="mr-1.5 mt-[37px] flex h-[245px] w-[33px] flex-col items-center justify-between bg-[#f4f4f4] pb-[18px] pt-2.5">
        <Rewind />
        <span className="rotate-180 font-['Open_Sans',sans-serif] text-[17px] text-black [writing-mode:vertical-rl]">QUICK SETUP</span>
      </button>
    </aside>
  </main>
);

/* ---------- timeline ---------- */

const playback = [
  { name: "First", d: "M1 1h3v20H1zM18 1v20L5 11z" },
  { name: "Back", d: "M15 2v18L1 11zM17 7h3v8h-3z" },
  { name: "Play", d: "M2 0v23l17-12z" },
  { name: "Forward", d: "M6 2v18l14-9zM1 7h3v8H1z" },
  { name: "Last", d: "M2 1v20l13-10zM16 1h3v20h-3z" },
];

const Timeline = () => (
  <footer className="relative flex h-[75px] border-t border-[#d0d0d0] bg-[#f1f1f1]">
    <div className="absolute left-[1240px] top-0 h-2.5 w-[216px] rounded-b bg-[#c9c9c9]" />
    <div className="flex w-[203px] shrink-0 items-center gap-[15px] pl-4 pt-2.5">
      {playback.map(({ name, d }) => (
        <button key={name} aria-label={name}><svg className="h-[22px] w-[22px]" viewBox="0 0 22 22"><path d={d} fill="#606060" /></svg></button>
      ))}
    </div>
    <div className="mt-[18px] flex h-[45px] w-2.5 shrink-0 items-end gap-0.5">
      <span className="h-[3px] w-[3px] bg-[#c9c9c9]" />
      <span className="h-[3px] w-1 bg-[#c9c9c9]" />
    </div>
    <ol className="mt-[18px] flex h-[45px] border-b-[3px] border-[#c9c9c9]">
      {timeline.map((t, i) => {
        const Icon = timelineIcons[t];
        return (
          <li key={i} className="flex w-9 flex-col items-center justify-between">
            <button
              aria-label={`Step ${i + 1}`}
              className={clsx("flex h-9 w-full items-center justify-center", i === activeStep && "rounded-xs border-[3px] border-[#3f6f96] bg-[#e7e80f]")}
            >
              <Icon />
            </button>
            <span className="h-2 w-[3px] shrink-0 bg-[#c9c9c9]" />
          </li>
        );
      })}
    </ol>
    <svg className="-ml-[9px] mt-3.5 h-12 w-[18px] shrink-0" viewBox="0 0 18 48">
      <path d="M0 0h18v6l-7 6v36H8V12L0 6z" fill="#5f5f5f" />
    </svg>
    <button aria-label="Timeline settings" className="ml-auto mr-5 mt-2 flex items-center"><Gear className="h-6 w-6" /></button>
  </footer>
);

export default function App() {
  return (
    <div className="min-w-[1600px] overflow-hidden bg-[#f1f1f1] font-['Liberation_Sans',Arial,sans-serif] text-[17px] text-[#3a3a3a]">
      <TitleBar />
      <TabBar />
      <Ribbon />
      <Viewport />
      <Timeline />
    </div>
  );
}
